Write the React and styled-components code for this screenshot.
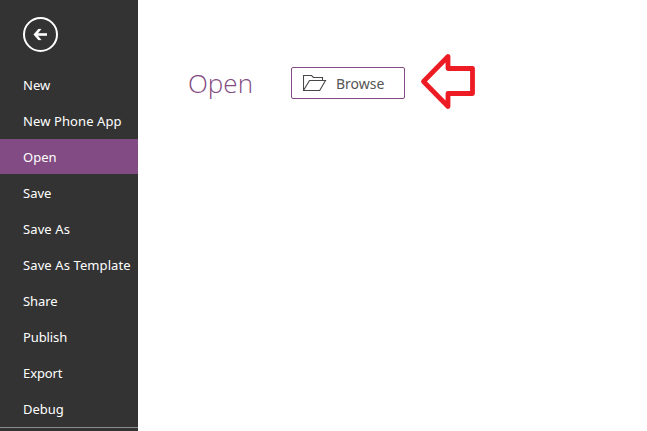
import React from "react";
import styled, { createGlobalStyle } from "styled-components";

const GlobalStyle = createGlobalStyle`
  * { box-sizing: border-box; }
  body {
    margin: 0;
    overflow: hidden;
    background: #fff;
    font-family: "Noto Sans", "Open Sans", sans-serif;
  }
`;

const Page = styled.div`
  display: flex;
  width: 647px;
  height: 431px;
`;

const Sidebar = styled.nav`
  width: 138px;
  height: 431px;
  background: #333;
  overflow: hidden;
`;

const BackButton = styled.button`
  display: block;
  margin: 17px 0 15px 23px;
  padding: 0;
  width: 35px;
  height: 35px;
  border: 0;
  background: none;

  svg { display: block; }
`;

const Menu = styled.ul`
  display: flex;
  flex-direction: column;
  gap: 1px;
  margin: 0;
  padding: 0;
  list-style: none;
`;

const MenuItem = styled.li`
  height: 35px;
  padding-left: 23px;
  background: ${(p) => (p.$active ? "#834b83" : "transparent")};
  color: #fff;
  font-size: 13px;
  line-height: 36px;
  letter-spacing: ${(p) => p.$spacing || 0}px;
  white-space: nowrap;
`;

const Divider = styled.div`
  height: 1px;
  margin-top: 1px;
  background: #8b8b8b;
`;

const Content = styled.main`
  display: flex;
  align-items: flex-start;
  padding: 67px 0 0 50px;
`;

const Title = styled.h1`
  width: 103px;
  margin: 0;
  color: #834b83;
  font-family: "Open Sans", sans-serif;
  font-size: 26px;
  font-weight: 300;
  line-height: 33px;
`;

const BrowseButton = styled.button`
  display: flex;
  align-items: center;
  gap: 9px;
  width: 114px;
  height: 32px;
  padding: 0 0 0 11px;
  border: 1px solid #834b83;
  border-radius: 2px;
  background: #fff;
  color: #555;
  font-family: "Noto Sans", sans-serif;
  font-size: 14px;
  line-height: 30px;
`;

const BrowseLabel = styled.span`
  padding-top: 1px;
`;

const Pointer = styled.svg`
  margin: -14px 0 0 15px;
`;

const items = [
  { label: "New", spacing: 0 },
  { label: "New Phone App", spacing: 0.1 },
  { label: "Open", spacing: 0, active: true },
  { label: "Save", spacing: 0 },
  { label: "Save As", spacing: 0.1 },
  { label: "Save As Template", spacing: 0.1 },
  { label: "Share", spacing: -0.1 },
  { label: "Publish", spacing: -0.1 },
  { label: "Export", spacing: -0.1 },
  { label: "Debug", spacing: 0 },
];

const BackIcon = () => (
  <svg width="35" height="35" viewBox="0 0 35 35" fill="none" stroke="#fff">
    <circle cx="17.5" cy="17.5" r="16.5" strokeWidth="2" />
    <path d="M24 17.5H13" strokeWidth="2.6" />
    <path d="M18.3 12H15.4L10.6 17.5L15.4 23H18.3L14 17.5Z" fill="#fff" strokeWidth="0.2" />
  </svg>
);

const FolderIcon = () => (
  <svg width="24" height="17" viewBox="0 0 24 17" fill="none" stroke="#484848" strokeWidth="1.1">
    <path d="M0.5 16V0.5H8.5L10.5 2.5H19.5V5.5" />
    <path d="M0.5 15.5L6.5 5.5H22.5L16.7 15.5Z" />
  </svg>
);

export default function App() {
  return (
    <>
      <GlobalStyle />
      <Page>
        <Sidebar>
          <BackButton aria-label="Back">
            <BackIcon />
          </BackButton>
          <Menu>
            {items.map((item) => (
              <MenuItem key={item.label} $active={item.active} $spacing={item.spacing}>
                {item.label}
              </MenuItem>
            ))}
          </Menu>
          <Divider />
        </Sidebar>
        <Content>
          <Title>Open</Title>
          <BrowseButton>
            <FolderIcon />
            <BrowseLabel>Browse</BrowseLabel>
          </BrowseButton>
          <Pointer width="56" height="57" viewBox="0 0 56 57" fill="none">
            <path
              d="M28 3.5V15.5H52.5V40.5H28V53.5L3.5 28.5Z"
              stroke="#ed1c24"
              strokeWidth="4.8"
              strokeLinejoin="round"
            />
          </Pointer>
        </Content>
      </Page>
    </>
  );
}
